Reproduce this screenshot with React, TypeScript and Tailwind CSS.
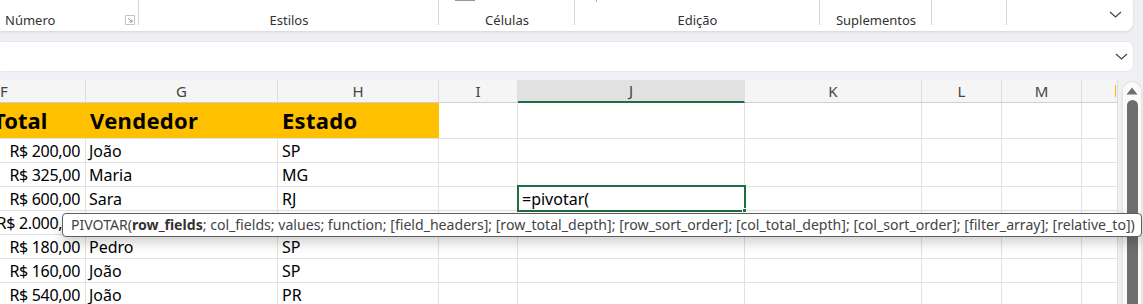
import React from 'react';

const ui = { fontFamily: '"Noto Sans", "Open Sans", sans-serif' };
const cellFont = { fontFamily: '"Noto Sans", "Open Sans", sans-serif' };

const columns = [
  { key: 'F', w: 'w-[86px]', label: 'F', align: 'justify-start' },
  { key: 'G', w: 'w-[192px]', label: 'G', align: 'justify-center' },
  { key: 'H', w: 'w-[161px]', label: 'H', align: 'justify-center' },
  { key: 'I', w: 'w-[79px]', label: 'I', align: 'justify-center' },
  { key: 'J', w: 'w-[227px]', label: 'J', align: 'justify-center' },
  { key: 'K', w: 'w-[177px]', label: 'K', align: 'justify-center' },
  { key: 'L', w: 'w-[80px]', label: 'L', align: 'justify-center' },
  { key: 'M', w: 'w-[80px]', label: 'M', align: 'justify-center' },
  { key: 'N', w: 'w-[36px]', label: '', align: 'justify-center' },
];

const rows = [
  { total: 'R$ 200,00', vendedor: 'João', estado: 'SP' },
  { total: 'R$ 325,00', vendedor: 'Maria', estado: 'MG' },
  { total: 'R$ 600,00', vendedor: 'Sara', estado: 'RJ', active: true },
  { total: 'R$ 2.000,00', vendedor: '', estado: '' },
  { total: 'R$ 180,00', vendedor: 'Pedro', estado: 'SP' },
  { total: 'R$ 160,00', vendedor: 'João', estado: 'SP' },
  { total: 'R$ 540,00', vendedor: 'João', estado: 'PR' },
];

function Chevron() {
  return (
    <svg width="13" height="7" viewBox="0 0 13 7" fill="none">
      <path d="M1 1l5.5 5L12 1" stroke="#444" strokeWidth="1.2" />
    </svg>
  );
}

function Launcher() {
  return (
    <svg width="10" height="10" viewBox="0 0 10 10" fill="none">
      <path d="M0.5 0.5h9v9" stroke="#c4c4c4" strokeWidth="1" />
      <path d="M0.5 0.5v9h9" stroke="#c4c4c4" strokeWidth="1" />
      <path d="M3 3l4 4M7 4.5V7H4.5" stroke="#9a9a9a" strokeWidth="1" />
    </svg>
  );
}

function Group({ w, label, sep = true, children }: { w: string; label?: string; sep?: boolean; children?: React.ReactNode }) {
  return (
    <div className={`${w} h-full flex flex-col relative`}>
      <div className="h-[12px] flex">{children}</div>
      <div className="flex-1 flex items-start justify-center text-[13px] text-[#333] leading-[16px]">{label}</div>
      {sep && <div className="absolute right-0 top-0 h-[25px] w-px bg-[#d6d6d6]" />}
    </div>
  );
}

export default function App() {
  return (
    <div className="w-[1143px] h-[304px] overflow-hidden bg-[#eef0f3] relative" style={ui}>
      {/* Ribbon */}
      <div className="h-[31px] w-[1133px] bg-white rounded-br-[8px] shadow-[0_1px_3px_rgba(0,0,0,0.12)] flex">
        <div className="w-[139px] h-full relative flex items-start">
          <span className="text-[13px] text-[#333] leading-[16px] ml-[5px] mt-[12px]">Número</span>
          <div className="ml-auto mr-[4px] mt-[15px]"><Launcher /></div>
          <div className="absolute right-0 top-0 h-[25px] w-px bg-[#d6d6d6]" />
        </div>
        <Group w="w-[300px]" label="Estilos" />
        <Group w="w-[136px]" label="Células">
          <div className="ml-[16px] w-[20px] h-[1px] bg-[#9a9a9a]" />
        </Group>
        <Group w="w-[245px]" label="Edição">
          <div className="ml-[21px] w-px h-[2px] bg-[#b0b0b0]" />
        </Group>
        <Group w="w-[112px]" label="Suplementos" />
        <Group w="w-[75px]" />
        <div className="flex-1 flex justify-end pr-[11px] pt-[11px]">
          <Chevron />
        </div>
      </div>

      {/* Formula bar */}
      <div className="mt-[11px] h-[29px] w-[1133px] bg-white rounded-r-[6px] shadow-[0_0_2px_rgba(0,0,0,0.12)] flex items-center justify-end pr-[5px]">
        <Chevron />
      </div>

      {/* Sheet */}
      <div className="mt-[9px] flex">
        <div className="w-[1118px] bg-white" style={cellFont}>
          {/* Column headers */}
          <div className="flex h-[23px] bg-[#f5f5f5] border-b border-[#cfcfcf]">
            {columns.map((c) => (
              <div
                key={c.key}
                className={`${c.w} shrink-0 flex items-center ${c.align} border-r text-[15px] text-[#444] ${
                  c.key === 'J'
                    ? 'bg-[#e1e1e1] border-[#e1e1e1] border-b-2 border-b-[#1e6e42] -mb-px'
                    : 'border-[#dcdcdc]'
                }`}
              >
                {c.key === 'N' ? <div className="ml-auto mr-[1px] w-px h-[12px] bg-[#f4b400]" /> : c.label}
              </div>
            ))}
          </div>

          {/* Header row */}
          <div className="flex h-[36px] border-b border-[#e1e1e1]">
            <div className="w-[86px] shrink-0 bg-[#ffc000] flex items-center text-[22px] font-bold text-black whitespace-nowrap overflow-hidden">
              <span className="-ml-[7px]">Total</span>
            </div>
            <div className="w-[192px] shrink-0 bg-[#ffc000] flex items-center text-[22px] font-bold text-black pl-[4px] tracking-[0.3px]">Vendedor</div>
            <div className="w-[161px] shrink-0 bg-[#ffc000] flex items-center text-[22px] font-bold text-black pl-[4px] tracking-[0.3px]">Estado</div>
            {columns.slice(3).map((c) => (
              <div key={c.key} className={`${c.w} shrink-0 border-r border-[#e1e1e1]`} />
            ))}
          </div>

          {/* Data rows */}
          {rows.map((r, i) => (
            <div key={i} className="flex h-[24px] border-b border-[#e1e1e1] text-[16px] text-black">
              <div className="w-[86px] shrink-0 border-r border-[#e1e1e1] flex items-center justify-end pr-[5px] whitespace-nowrap tracking-[-0.3px]">
                {r.total}
              </div>
              <div className="w-[192px] shrink-0 border-r border-[#e1e1e1] flex items-center pl-[3px]">{r.vendedor}</div>
              <div className="w-[161px] shrink-0 border-r border-[#e1e1e1] flex items-center pl-[4px]">{r.estado}</div>
              {columns.slice(3).map((c) => (
                <div key={c.key} className={`${c.w} shrink-0 border-r border-[#e1e1e1] relative`}>
                  {c.key === 'J' && r.active && (
                    <div className="absolute -left-[1px] -top-[2px] w-[229px] h-[27px] border-2 border-[#1e6e42] flex items-center pl-[3px] bg-white z-10">
                      =pivotar(
                      <div className="absolute -right-[3px] -bottom-[3px] w-[5px] h-[5px] bg-[#1e6e42] border border-white" />
                    </div>
                  )}
                </div>
              ))}
            </div>
          ))}
        </div>

        {/* Scrollbar */}
        <div className="w-[25px] flex justify-end pr-[2px] pt-[2px]">
          <div className="w-[18px] h-[240px] bg-[#fafafa] rounded-t-[9px] shadow-[0_0_3px_rgba(0,0,0,0.12)] flex flex-col items-center pt-[5px]">
            <svg width="12" height="8" viewBox="0 0 12 8">
              <path d="M6 0.5L11.5 7.5H0.5z" fill="#6e6e6e" />
            </svg>
            <div className="mt-[5px] w-[11px] flex-1 bg-[#6e6e6e] rounded-t-full" />
          </div>
        </div>
      </div>

      {/* Function tooltip */}
      <div className="absolute left-[62px] top-[213px] h-[24px] w-[1080px] bg-white border border-[#5f5f5f] rounded-[4px] shadow-[0_6px_12px_rgba(0,0,0,0.18)] flex items-center pl-[8px] text-[14.1px] text-[#444] whitespace-nowrap z-20">
        PIVOTAR(<b className="text-[#333]">row_fields</b>; col_fields; values; function; [field_headers]; [row_total_depth]; [row_sort_order]; [col_total_depth]; [col_sort_order]; [filter_array]; [relative_to])
      </div>
    </div>
  );
}
